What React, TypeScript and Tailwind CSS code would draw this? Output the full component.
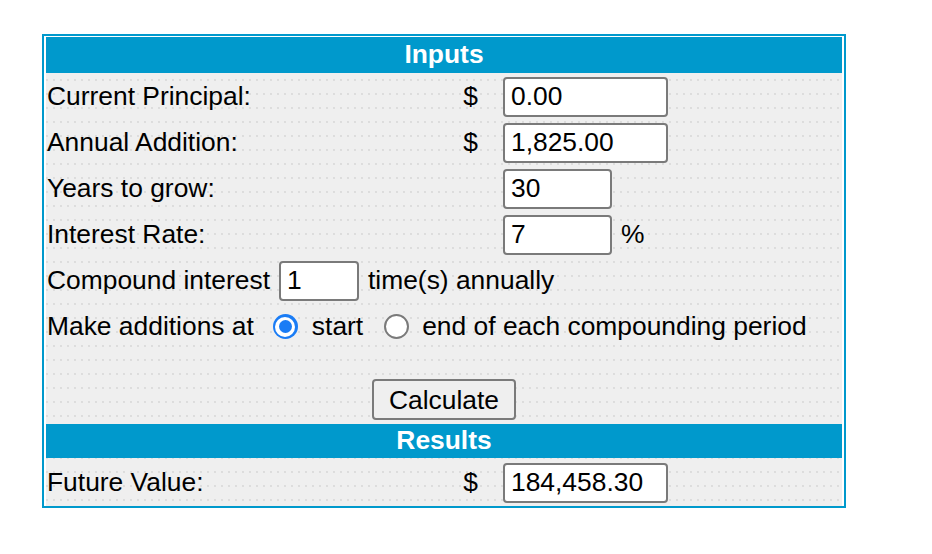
import React from 'react';

const rows = [
  { label: 'Current Principal:', cur: '$', value: '0.00', wide: true },
  { label: 'Annual Addition:', cur: '$', value: '1,825.00', wide: true },
  { label: 'Years to grow:', cur: '', value: '30', wide: false },
  { label: 'Interest Rate:', cur: '', value: '7', wide: false, suffix: '%' },
];

const Field = ({ value, className }: { value: string; className: string }) => (
  <input
    readOnly
    value={value}
    className={`h-[40px] rounded-[4px] border-2 border-[#7a7a7a] bg-white px-[6px] text-[26.4px] text-black outline-none ${className}`}
  />
);

const Radio = ({ checked }: { checked?: boolean }) =>
  checked ? (
    <span className="flex h-[25px] w-[25px] items-center justify-center rounded-full bg-[#1a7cf5]">
      <span className="flex h-[20px] w-[20px] items-center justify-center rounded-full bg-white">
        <span className="h-[13px] w-[13px] rounded-full bg-[#1a7cf5]" />
      </span>
    </span>
  ) : (
    <span className="h-[25px] w-[25px] rounded-full border-2 border-[#7a7a7a] bg-white" />
  );

const Header = ({ title, h }: { title: string; h: string }) => (
  <div className={`flex items-center justify-center bg-[#0099cc] text-[26.4px] font-bold text-white ${h}`}>
    {title}
  </div>
);

export default function App() {
  return (
    <div className="min-h-screen bg-white pt-[34px] pl-[42px] font-['Liberation_Sans',Arial,sans-serif] text-[26.4px] text-black">
      <div className="w-[804px] border-2 border-[#0099cc] bg-white px-[2px] pt-px">
        <div className="bg-[#efefef] bg-[radial-gradient(circle_at_1px_1px,#dcdcdc_0.7px,transparent_1px)] bg-[size:7px_14px]">
          <Header title="Inputs" h="h-[36px]" />

          {rows.map((r) => (
            <div key={r.label} className="grid h-[46px] grid-cols-[410px_22px_1fr] items-center pt-px">
              <div className="pl-px">{r.label}</div>
              <div className="text-right">{r.cur}</div>
              <div className="flex items-center pl-[25px]">
                <Field value={r.value} className={r.wide ? 'w-[165px]' : 'w-[109px]'} />
                {r.suffix && <span className="ml-[9px]">{r.suffix}</span>}
              </div>
            </div>
          ))}

          <div className="flex h-[46px] items-center pl-px pt-px">
            <span>Compound interest</span>
            <Field value="1" className="ml-[9px] w-[80px]" />
            <span className="ml-[9px]">time(s) annually</span>
          </div>

          <div className="flex h-[46px] items-center pl-px pt-px">
            <span>Make additions at</span>
            <span className="ml-[19px] flex">
              <Radio checked />
            </span>
            <span className="ml-[14px]">start</span>
            <span className="ml-[21px] flex">
              <Radio />
            </span>
            <span className="ml-[13px]">end of each compounding period</span>
          </div>

          <div className="h-[27px]" />

          <div className="flex h-[48px] items-center justify-center pb-[2px]">
            <button className="h-[41px] w-[144px] rounded-[4px] border-2 border-[#7a7a7a] bg-[#efefef] text-[26.4px] text-black">
              Calculate
            </button>
          </div>

          <Header title="Results" h="h-[34px]" />

          <div className="grid h-[48px] grid-cols-[410px_22px_1fr] items-center pt-px">
            <div className="pl-px">Future Value:</div>
            <div className="text-right">$</div>
            <div className="flex items-center pl-[25px]">
              <Field value="184,458.30" className="w-[165px]" />
            </div>
          </div>
        </div>
      </div>
    </div>
  );
}
